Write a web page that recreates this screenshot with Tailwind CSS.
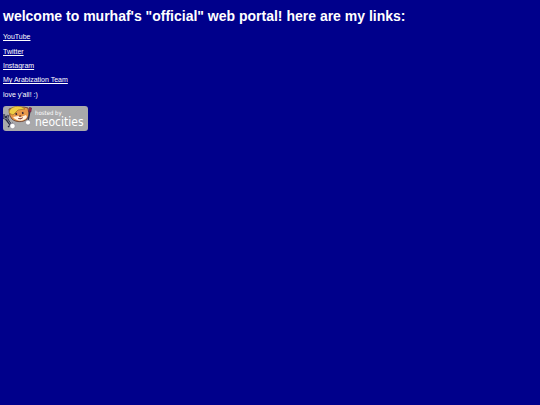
<!DOCTYPE html>
<html lang="en">
<head>
<meta charset="utf-8">
<meta name="viewport" content="width=device-width, initial-scale=1">
<title>murhaf's web portal</title>
<script src="https://cdn.jsdelivr.net/npm/@tailwindcss/browser@4"></script>
</head>
<body class="min-h-screen bg-[#00008b] px-[3px] pt-2 text-[7px] leading-[8px] text-white font-['Liberation_Sans',Arial,sans-serif]">
<main>
  <h1 class="text-[14px] leading-4 font-bold">welcome to murhaf's "official" web portal! here are my links:</h1>
  <div class="mt-1.5 grid h-[72px] grid-rows-5 items-center justify-items-start">
    <a class="underline" href="#youtube">YouTube</a>
    <a class="underline" href="#twitter">Twitter</a>
    <a class="underline" href="#instagram">Instagram</a>
    <a class="underline" href="#team">My Arabization Team</a>
    <p>love y'all! :)</p>
  </div>
  <a href="#neocities" class="mt-1 flex h-[25px] w-[85px] rounded-[3px] bg-[#a9a9ab] text-white">
    <svg class="h-[25px] w-8 shrink-0" viewBox="0 0 32 25" aria-hidden="true">
      <!-- fork -->
      <path d="M3 11 7 18" fill="none" stroke="#2b2d44" stroke-width="2.4" stroke-linecap="round"/>
      <path d="M1 8v4l3 1 1-4M3 13l5 6" fill="none" stroke="#2b2d44" stroke-width="2.2" stroke-linejoin="round"/>
      <path d="M1 8v4l3 1 1-4M4 13l4 6" fill="none" stroke="#8f93a6" stroke-width=".8"/>
      <path d="m5 21 5-4" stroke="#2b2d44" stroke-width="1.4"/>
      <!-- cat -->
      <path d="M7 10 6 3l4-1 11-1 4 1 1 7-2 4c-4 4-12 3-15 0z" fill="#e8984a" stroke="#6b4235" stroke-width=".9"/>
      <path d="M6 7C6 1 14-1 19 1l3 2-7 1-5 5z" fill="#efcd45" stroke="#9c7425" stroke-width=".7"/>
      <path d="m10 11 5-1 3 1 5-2 1 2c-3 5-10 5-14 0z" fill="#fff1e0"/>
      <path d="m13 7 .5 2m6-3 .5 2" stroke="#392736" stroke-width="1.5"/>
      <path d="m16 10 2-.5-.7 1.3zM15 12.5q3 1.5 5-1" fill="#8b4637" stroke="#8b4637" stroke-width=".7"/>
      <!-- brush -->
      <path d="m27 5-2 10" stroke="#33334a" stroke-width="1.3" stroke-linecap="round"/>
      <path d="m26.5 1.5 2 .5-.7 4-2-.5z" fill="#aa2347" stroke="#5b2341" stroke-width=".7"/>
      <!-- paws -->
      <circle cx="9.5" cy="20" r="2.7" fill="#fff" stroke="#85818e" stroke-width=".6"/>
      <circle cx="25" cy="16.5" r="2.5" fill="#fff" stroke="#85818e" stroke-width=".6"/>
    </svg>
    <span class="flex flex-col pt-[3px] font-['DejaVu_Sans_Condensed','Open_Sans',sans-serif]">
      <span class="text-[6px] leading-[7px]">hosted by</span>
      <span class="text-[12px] leading-[12px]">neocities</span>
    </span>
  </a>
</main>
</body>
</html>
